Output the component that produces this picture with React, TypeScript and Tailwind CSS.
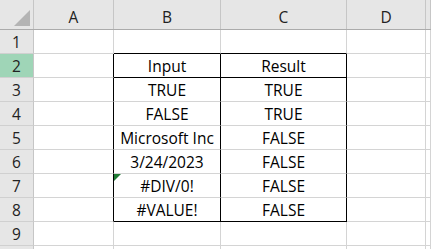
import React from 'react';

const columns = [
  { key: 'A', width: 'w-[80px]' },
  { key: 'B', width: 'w-[107px]' },
  { key: 'C', width: 'w-[126px]' },
  { key: 'D', width: 'w-[79px]' },
  { key: 'E', width: 'flex-1' },
];

// B2:C8 holds the little lookup table, everything else is empty
const rows: { num: number; b?: string; c?: string }[] = [
  { num: 1 },
  { num: 2, b: 'Input', c: 'Result' },
  { num: 3, b: 'TRUE', c: 'TRUE' },
  { num: 4, b: 'FALSE', c: 'TRUE' },
  { num: 5, b: 'Microsoft Inc', c: 'FALSE' },
  { num: 6, b: '3/24/2023', c: 'FALSE' },
  { num: 7, b: '#DIV/0!', c: 'FALSE' },
  { num: 8, b: '#VALUE!', c: 'FALSE' },
  { num: 9 },
  { num: 10 },
];

const inTable = (n: number) => n >= 2 && n <= 8;

function borderClasses(col: string, row: number) {
  // right edge: black for A/B/C along the table, gridline elsewhere
  const right = inTable(row) && (col === 'A' || col === 'B' || col === 'C') ? 'border-r-black' : 'border-r-[#d4d4d4]';
  // bottom edge: black above the table, under the header row and under the last row
  const bottom =
    (col === 'B' || col === 'C') && (row === 1 || row === 2 || row === 8) ? 'border-b-black' : 'border-b-[#d4d4d4]';
  return `${right} ${bottom}`;
}

function GridCell({ col, row, text, width }: { col: string; row: number; text?: string; width: string }) {
  return (
    <div
      className={`${width} h-[24px] shrink-0 relative border-r border-b ${borderClasses(col, row)} flex items-end justify-center pb-[1px] text-[15.5px] leading-[20px] text-black whitespace-nowrap overflow-visible`}
    >
      {col === 'B' && row === 7 && (
        <svg className="absolute left-0 top-0" width="8" height="8" viewBox="0 0 8 8">
          <polygon points="0,0 7,0 0,7" fill="#1e7b34" />
        </svg>
      )}
      {text}
    </div>
  );
}

export default function App() {
  return (
    <div className="w-[431px] h-[249px] overflow-hidden bg-white select-none" style={{ fontFamily: '"Open Sans", "Noto Sans", sans-serif' }}>
      {/* column header strip */}
      <div className="flex h-[30px] bg-[#e6e6e6] border-b border-[#ababab]">
        <div className="w-[34px] shrink-0 border-r border-[#c6c6c6] relative">
          <svg className="absolute left-[14px] top-[10px]" width="17" height="17" viewBox="0 0 17 17">
            <polygon points="16,0 16,16 0,16" fill="#b4b4b4" />
          </svg>
        </div>
        {columns.map((c) => (
          <div
            key={c.key}
            className={`${c.width} shrink-0 border-r border-[#c6c6c6] flex items-end justify-center pb-[2px] text-[15.5px] leading-[20px] text-[#222]`}
          >
            {/* E is only a sliver at the window edge, its letter falls outside */}
            {c.key === 'E' ? null : c.key}
          </div>
        ))}
      </div>

      {rows.map((r) => (
        <div key={r.num} className="flex">
          <div
            className={`w-[34px] h-[24px] shrink-0 border-r border-b border-r-[#c6c6c6] border-b-[#d0d0d0] flex items-center justify-center text-[15.5px] leading-[20px] text-[#222] ${r.num === 2 ? 'bg-[#9fd5b7]' : 'bg-[#e6e6e6]'}`}
          >
            {r.num < 10 ? r.num : null}
          </div>
          {columns.map((c) => (
            <GridCell
              key={c.key}
              col={c.key}
              row={r.num}
              width={c.width}
              text={c.key === 'B' ? r.b : c.key === 'C' ? r.c : undefined}
            />
          ))}
        </div>
      ))}
    </div>
  );
}
